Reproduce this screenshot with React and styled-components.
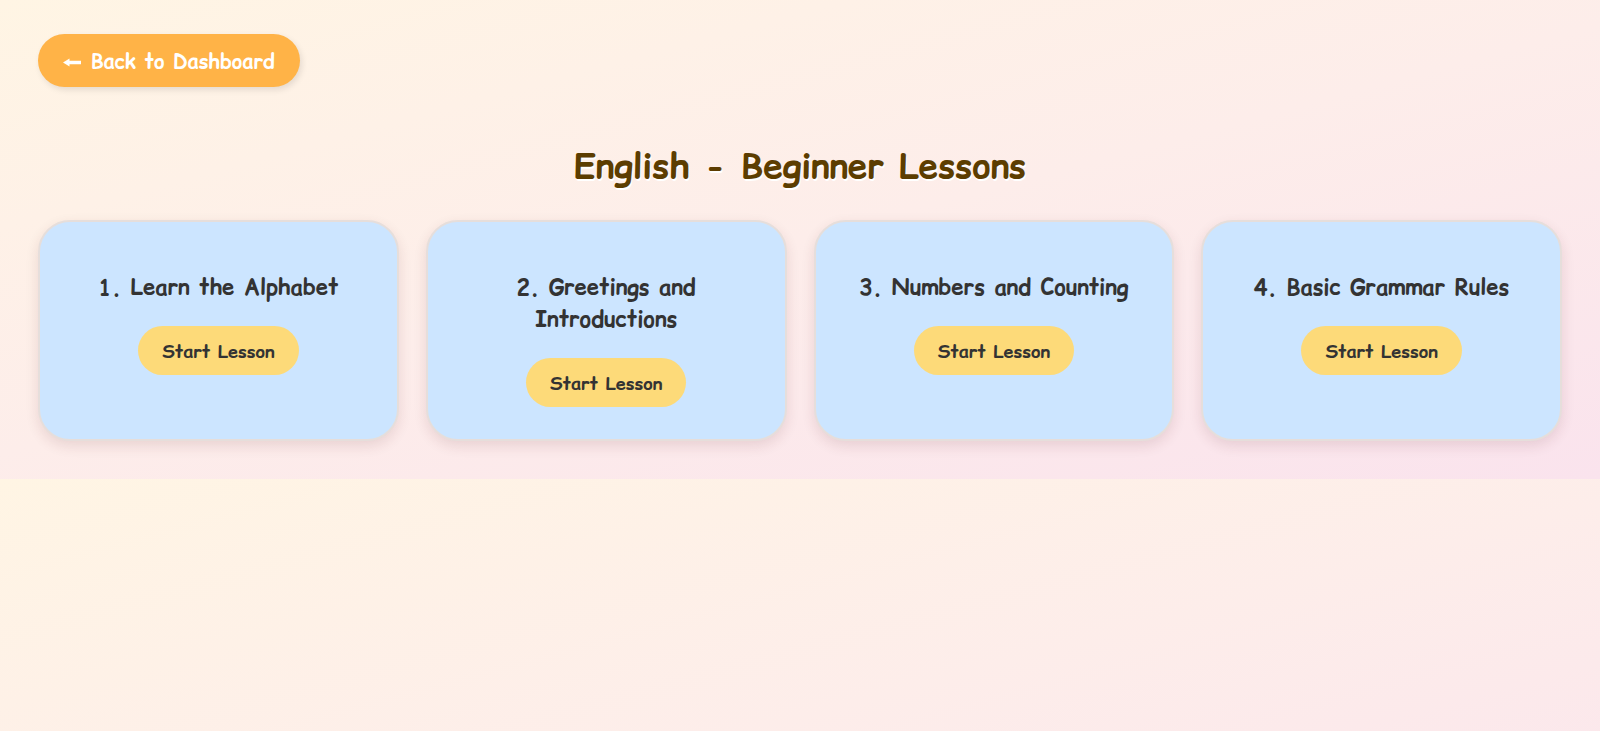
import React from "react";
import styled, { createGlobalStyle } from "styled-components";

const GlobalStyle = createGlobalStyle`
  *, *::before, *::after { box-sizing: border-box; }
  body {
    margin: 0;
    background: linear-gradient(165deg, #fff5e4, #fdedea 50%, #fae3ed);
    font-family: "Comic Relief", "Comic Sans MS", "DejaVu Sans", sans-serif;
    color: #333;
  }
`;

const Page = styled.main`
  padding: 34px 38px 38px;
`;

const PillButton = styled.button`
  border: 0;
  border-radius: 32px;
  padding: 2px 24px 0;
  font-family: inherit;
  font-weight: 700;
  white-space: nowrap;
  cursor: pointer;
`;

const BackButton = styled(PillButton)`
  display: flex;
  align-items: center;
  gap: 10px;
  height: 53px;
  padding: 2px 25px 0;
  font-size: 20px;
  color: #fff;
  background: #ffb347;
  box-shadow: 2px 3px 6px rgba(0, 0, 0, 0.1);
`;

const StartButton = styled(PillButton)`
  height: 49px;
  font-size: 18px;
  color: #333;
  background: #fdda79;
`;

const Title = styled.h1`
  margin: 52px 0 27px;
  font-size: 35px;
  line-height: 54px;
  text-align: center;
  color: #5c3d00;
  text-shadow: 1px 2px 0 #fff;
`;

const Lessons = styled.div`
  display: grid;
  grid-template-columns: repeat(auto-fit, minmax(280px, 1fr));
  gap: 27px;
`;

const Card = styled.article`
  padding: 49px 32px 32px;
  border: 2px solid #e6dedb;
  border-radius: 32px;
  background: #cce5ff;
  text-align: center;
  box-shadow: 0 5px 13px rgba(90, 30, 40, 0.12);
`;

const CardTitle = styled.h2`
  margin: 0 0 23px;
  font-size: 22px;
  line-height: 32px;
`;

const ArrowLeft = () => (
  <svg width="18" height="10" viewBox="0 0 18 10" fill="currentColor" aria-hidden="true">
    <path d="M0 5.5 6.5 1.5V3.7H18V7.3H6.5V9.5Z" />
  </svg>
);

const lessons = [
  "Learn the Alphabet",
  "Greetings and Introductions",
  "Numbers and Counting",
  "Basic Grammar Rules",
];

export default function App() {
  return (
    <>
      <GlobalStyle />
      <Page>
        <BackButton type="button">
          <ArrowLeft />
          Back to Dashboard
        </BackButton>
        <Title>English - Beginner Lessons</Title>
        <Lessons>
          {lessons.map((name, i) => (
            <Card key={name}>
              <CardTitle>{`${i + 1}. ${name}`}</CardTitle>
              <StartButton type="button">Start Lesson</StartButton>
            </Card>
          ))}
        </Lessons>
      </Page>
    </>
  );
}
